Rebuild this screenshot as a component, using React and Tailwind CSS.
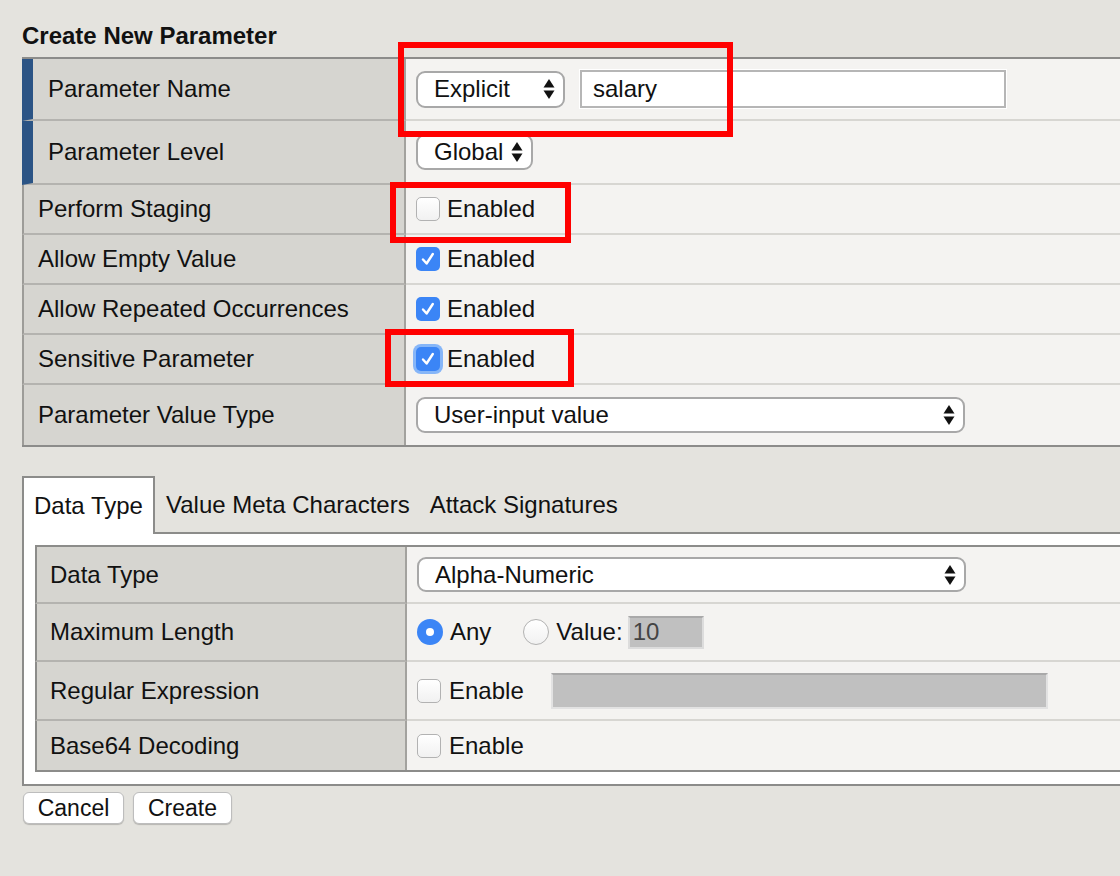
import React from "react";

function Arrows() {
  return (
    <svg width="12" height="22" viewBox="0 0 12 22" className="shrink-0">
      <path d="M6 1 L11.5 9.5 L0.5 9.5 Z" fill="#111" />
      <path d="M0.5 12.5 L11.5 12.5 L6 21 Z" fill="#111" />
    </svg>
  );
}

function Select({ className, text }) {
  return (
    <div className={`flex items-center justify-between bg-white border-2 border-[#a8a8a8] rounded-[9px] pl-[16px] pr-[8px] ${className}`}>
      <span className="leading-none">{text}</span>
      <Arrows />
    </div>
  );
}

function Checkbox({ checked, focus }) {
  if (!checked) {
    return <span className="block w-[24px] h-[24px] shrink-0 rounded-[5px] border border-[#b2b2b2] bg-linear-to-b from-white to-[#f1f1f1]" />;
  }
  return (
    <span
      className={`w-[24px] h-[24px] shrink-0 rounded-[5px] bg-[#3b85f6] flex items-center justify-center ${
        focus ? "shadow-[0_0_0_3px_#86b6f8]" : ""
      }`}
    >
      <svg width="18" height="18" viewBox="0 0 18 18">
        <path d="M4 9.5 L7.6 13.5 L13.8 4" fill="none" stroke="#fff" strokeWidth="2.4" strokeLinecap="round" strokeLinejoin="round" />
      </svg>
    </span>
  );
}

function Radio({ checked, className = "" }) {
  if (checked) {
    return (
      <span className={`w-[26px] h-[26px] shrink-0 rounded-full bg-[#3b85f6] flex items-center justify-center ${className}`}>
        <span className="w-[8px] h-[8px] rounded-full bg-white" />
      </span>
    );
  }
  return <span className={`block w-[26px] h-[26px] shrink-0 rounded-full border border-[#b2b2b2] bg-linear-to-b from-white to-[#f1f1f1] ${className}`} />;
}

function Row({ label, h, blue, last, children }) {
  return (
    <div className={`flex ${h}`}>
      <div
        className={`w-[384px] shrink-0 flex items-center bg-[#d6d5d0] border-r-2 border-r-[#a3a29e] ${
          blue ? "border-l-[11px] border-l-[#2b5485] pl-[15px]" : "border-l-2 border-l-[#9d9c98] pl-[14px]"
        } ${last ? "" : "border-b-2 border-b-[#b4b3af]"}`}
      >
        {label}
      </div>
      <div className={`flex-1 flex items-center pl-[10px] bg-[#f4f3f1] ${last ? "" : "border-b-2 border-b-[#d7d6d2]"}`}>
        {children}
      </div>
    </div>
  );
}

function InnerRow({ label, h, last, children }) {
  return (
    <div className={`flex ${h}`}>
      <div
        className={`w-[372px] shrink-0 flex items-center bg-[#d6d5d0] border-l-2 border-l-[#8c8c8a] border-r-2 border-r-[#a3a29e] pl-[13px] ${
          last ? "" : "border-b-2 border-b-[#b4b3af]"
        }`}
      >
        {label}
      </div>
      <div className={`flex-1 flex items-center pl-[10px] bg-[#f4f3f1] ${last ? "" : "border-b-2 border-b-[#d7d6d2]"}`}>
        {children}
      </div>
    </div>
  );
}

function Enabled({ checked, focus, text = "Enabled" }) {
  return (
    <div className="flex items-center gap-[7px]">
      <Checkbox checked={checked} focus={focus} />
      <span>{text}</span>
    </div>
  );
}

export default function App() {
  return (
    <div className="relative w-[1120px] h-[876px] overflow-hidden bg-[#e4e3de] text-[#111] text-[24px] font-['Liberation_Sans',Arial,sans-serif]">
      <div className="pl-[22px] pt-[22px]">
        <h1 className="h-[35px] text-[24px] leading-[28px] font-bold">Create New Parameter</h1>

        <div className="border-t-2 border-b-2 border-[#8c8c8a]">
          <Row label="Parameter Name" h="h-[62px]" blue>
            <div className="flex items-center gap-[15px]">
              <Select className="w-[149px] h-[37px]" text="Explicit" />
              <div className="w-[426px] h-[38px] bg-white border-2 border-[#b6b6b6] shadow-[0_0_0_1px_#ffffff] flex items-center pl-[11px]">
                salary
              </div>
            </div>
          </Row>
          <Row label="Parameter Level" h="h-[64px]" blue>
            <Select className="w-[117px] h-[36px]" text="Global" />
          </Row>
          <Row label="Perform Staging" h="h-[50px]">
            <Enabled checked={false} />
          </Row>
          <Row label="Allow Empty Value" h="h-[50px]">
            <Enabled checked />
          </Row>
          <Row label="Allow Repeated Occurrences" h="h-[50px]">
            <Enabled checked />
          </Row>
          <Row label="Sensitive Parameter" h="h-[50px]">
            <Enabled checked focus />
          </Row>
          <Row label="Parameter Value Type" h="h-[60px]" last>
            <Select className="w-[549px] h-[36px]" text="User-input value" />
          </Row>
        </div>

        <div className="mt-[29px]">
          <div className="flex items-end h-[58px]">
            <div className="h-[58px] bg-white border-2 border-b-0 border-[#8c8c8a] px-[10px] flex items-center">Data Type</div>
            <div className="h-[56px] border-b-2 border-[#8c8c8a] pl-[11px] pr-[10px] flex items-center">Value Meta Characters</div>
            <div className="h-[56px] border-b-2 border-[#8c8c8a] px-[10px] flex items-center">Attack Signatures</div>
            <div className="flex-1 h-[56px] border-b-2 border-[#8c8c8a]" />
          </div>
          <div className="bg-white border-l-2 border-b-2 border-[#8c8c8a] pl-[11px] pt-[11px] pb-[12px]">
            <div className="border-t-2 border-b-2 border-[#8c8c8a]">
              <InnerRow label="Data Type" h="h-[57px]">
                <Select className="w-[549px] h-[35px]" text="Alpha-Numeric" />
              </InnerRow>
              <InnerRow label="Maximum Length" h="h-[58px]">
                <div className="flex items-center">
                  <Radio checked />
                  <span className="ml-[7px]">Any</span>
                  <Radio className="ml-[32px]" />
                  <span className="ml-[7px]">Value:</span>
                  <div className="ml-[5px] w-[76px] h-[33px] bg-[#c0c0c0] border-2 border-[#dcdcdc] border-t-[#a9a9a9] flex items-center pl-[3px] text-[#444]">
                    10
                  </div>
                </div>
              </InnerRow>
              <InnerRow label="Regular Expression" h="h-[59px]">
                <div className="flex items-center">
                  <Checkbox checked={false} />
                  <span className="ml-[8px]">Enable</span>
                  <div className="ml-[27px] w-[497px] h-[36px] bg-[#c0c0c0] border-2 border-[#e2e2e2] border-t-[#a9a9a9]" />
                </div>
              </InnerRow>
              <InnerRow label="Base64 Decoding" h="h-[49px]" last>
                <div className="flex items-center">
                  <Checkbox checked={false} />
                  <span className="ml-[8px]">Enable</span>
                </div>
              </InnerRow>
            </div>
          </div>
        </div>

        <div className="flex gap-[9px] mt-[6px] pl-[1px]">
          <button className="w-[101px] h-[32px] bg-white border border-[#bdbdbd] rounded-[6px] shadow-[0_1px_1px_rgba(0,0,0,0.2)] text-[23px] leading-none">
            Cancel
          </button>
          <button className="w-[99px] h-[32px] bg-white border border-[#bdbdbd] rounded-[6px] shadow-[0_1px_1px_rgba(0,0,0,0.2)] text-[23px] leading-none">
            Create
          </button>
        </div>
      </div>

      {/* annotation boxes */}
      <div className="absolute left-[398px] top-[42px] w-[335px] h-[95px] border-[6px] border-[#ff0000]" />
      <div className="absolute left-[390px] top-[182px] w-[181px] h-[61px] border-[6px] border-[#ff0000]" />
      <div className="absolute left-[385px] top-[329px] w-[189px] h-[58px] border-[6px] border-[#ff0000]" />
    </div>
  );
}
